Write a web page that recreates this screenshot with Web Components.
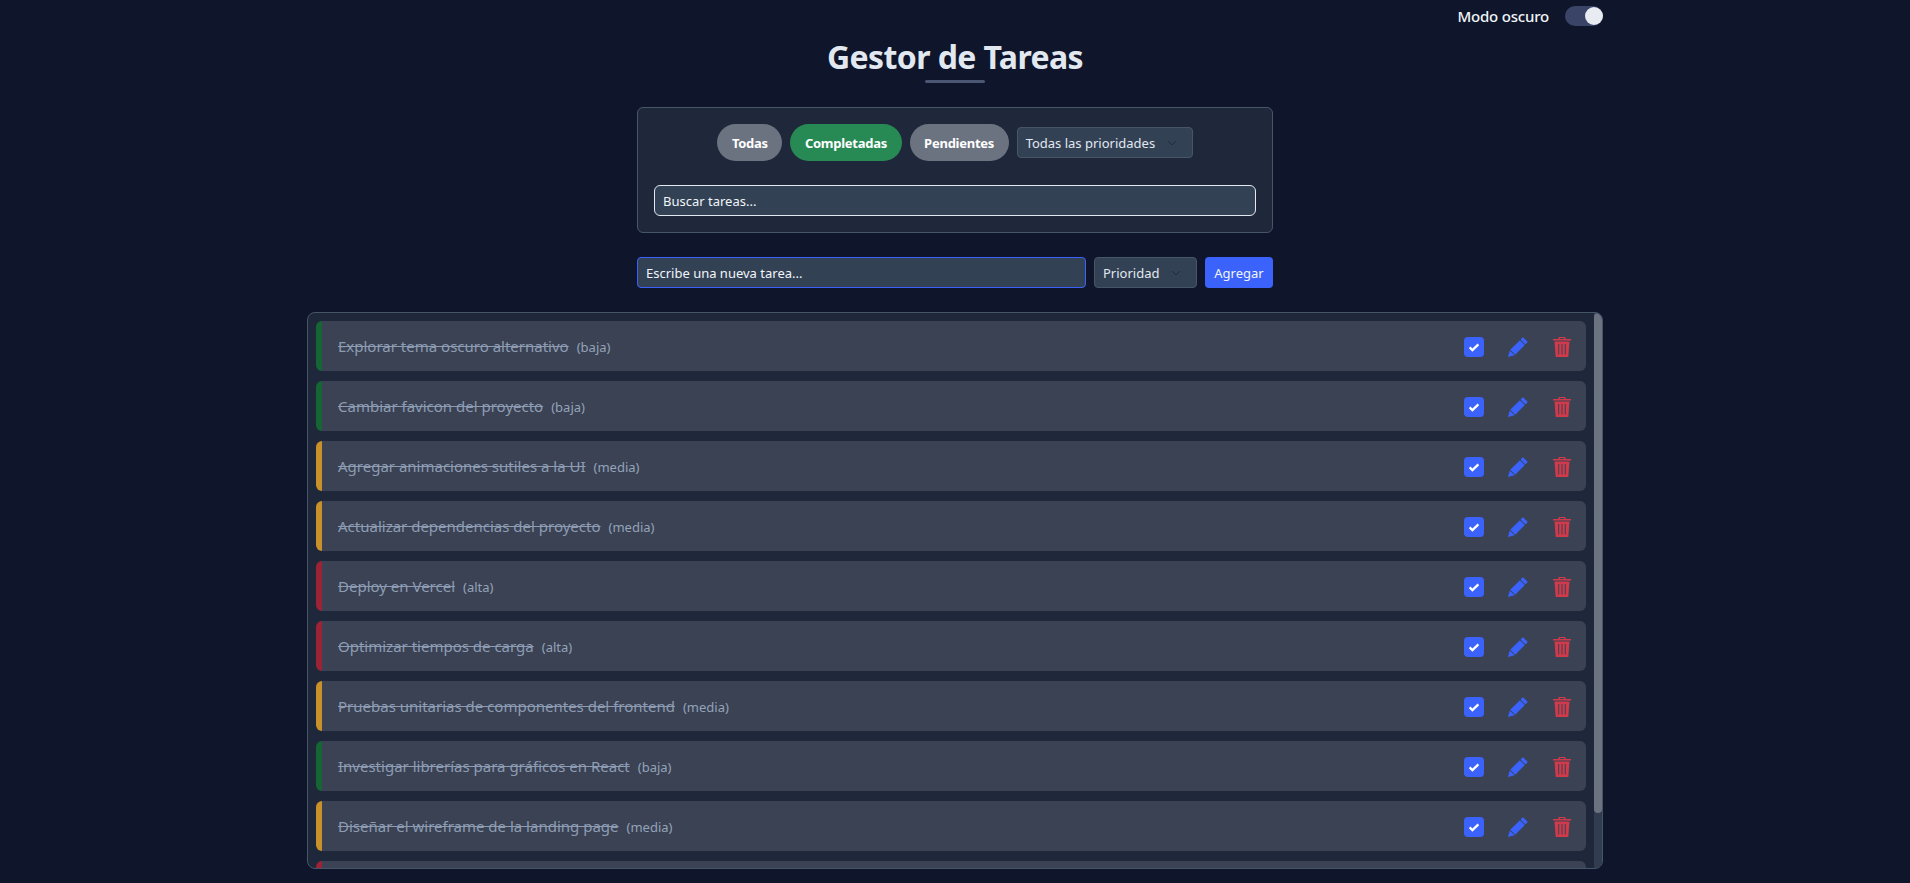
<!DOCTYPE html>
<html lang="es">
<head>
<meta charset="utf-8">
<title>Gestor de Tareas</title>
<style>
  html, body { margin: 0; height: 100%; overflow: hidden; }
  body { background: #0f152a; color: #f1f5f9; font-family: "Noto Sans", "Open Sans", sans-serif; }
</style>
</head>
<body>
<task-app></task-app>
<script>
class ThemeToggle extends HTMLElement {
  constructor() {
    super();
    this.attachShadow({ mode: 'open' });
  }
  connectedCallback() {
    this.shadowRoot.innerHTML = `
      <style>
        :host { display: flex; justify-content: flex-end; align-items: center; gap: 16px; height: 20px; padding-top: 6px; }
        span { font-size: 15px; font-weight: 500; letter-spacing: -0.2px; color: #f1f5f9; }
        .track { width: 38px; height: 20px; border-radius: 10px; background: #3a4466; display: flex; justify-content: flex-end; align-items: center; }
        .knob { width: 18px; height: 18px; border-radius: 50%; background: #e8ebf2; }
      </style>
      <span>Modo oscuro</span>
      <div class="track"><div class="knob"></div></div>
    `;
  }
}

class PillButton extends HTMLElement {
  constructor() {
    super();
    this.attachShadow({ mode: 'open' });
  }
  connectedCallback() {
    this.shadowRoot.innerHTML = `
      <style>
        :host { display: flex; align-items: center; height: 37px; padding: 0 14.5px; border-radius: 19px; background: #6b7280; color: #fff; font-size: 13px; font-weight: 700; letter-spacing: -0.25px; }
        :host([active]) { background: #278a55; }
      </style>
      <slot></slot>
    `;
  }
}

class PrioritySelect extends HTMLElement {
  constructor() {
    super();
    this.attachShadow({ mode: 'open' });
  }
  connectedCallback() {
    this.shadowRoot.innerHTML = `
      <style>
        :host { display: flex; align-items: center; justify-content: space-between; box-sizing: border-box; height: 31px; padding: 0 15px 0 8px; border: 1px solid #475569; border-radius: 4px; background: #334155; color: #e2e8f0; font-size: 13px; }
        svg { width: 10px; height: 10px; fill: none; stroke: #1e293b; stroke-width: 1.5; }
      </style>
      <slot></slot>
      <svg viewBox="0 0 16 16"><path d="M2 5l6 6 6-6"/></svg>
    `;
  }
}

class FilterPanel extends HTMLElement {
  constructor() {
    super();
    this.attachShadow({ mode: 'open' });
  }
  connectedCallback() {
    this.shadowRoot.innerHTML = `
      <style>
        :host { display: flex; flex-direction: column; gap: 24px; box-sizing: border-box; width: 636px; height: 126px; padding: 16px; border: 1px solid #475569; border-radius: 6px; background: #1f283b; }
        .filters { display: flex; justify-content: center; align-items: center; gap: 8px; }
        priority-select { width: 176px; }
        input { box-sizing: border-box; width: 100%; height: 31px; padding: 0 8px; border: 1px solid #e2e8f0; border-radius: 6px; background: #334155; color: #f1f5f9; font: inherit; font-size: 13px; outline: none; }
        input::placeholder { color: #f1f5f9; opacity: 1; }
      </style>
      <div class="filters">
        <pill-button>Todas</pill-button>
        <pill-button active>Completadas</pill-button>
        <pill-button>Pendientes</pill-button>
        <priority-select>Todas las prioridades</priority-select>
      </div>
      <input type="text" placeholder="Buscar tareas...">
    `;
  }
}

class NewTaskForm extends HTMLElement {
  constructor() {
    super();
    this.attachShadow({ mode: 'open' });
  }
  connectedCallback() {
    this.shadowRoot.innerHTML = `
      <style>
        :host { display: flex; gap: 8px; width: 636px; height: 31px; }
        input { flex: 1; min-width: 0; box-sizing: border-box; height: 31px; padding: 1px 8px 0; border: 1px solid #3b63fb; border-radius: 4px; background: #334155; color: #f1f5f9; font: inherit; font-size: 13px; outline: none; }
        input::placeholder { color: #f1f5f9; opacity: 1; }
        priority-select { width: 103px; padding-top: 1px; }
        button { box-sizing: border-box; width: 68px; height: 31px; padding: 1px 0 0; border: 0; border-radius: 4px; background: #3b63fb; color: #f1f5f9; font: inherit; font-size: 13px; }
      </style>
      <input type="text" placeholder="Escribe una nueva tarea...">
      <priority-select>Prioridad</priority-select>
      <button>Agregar</button>
    `;
  }
}

class TaskItem extends HTMLElement {
  constructor() {
    super();
    this.attachShadow({ mode: 'open' });
  }
  connectedCallback() {
    const priority = this.getAttribute('priority');
    this.shadowRoot.innerHTML = `
      <style>
        :host { display: flex; align-items: center; flex: none; box-sizing: border-box; height: 50px; padding: 0 15px 0 16px; border-left: 6px solid #166534; border-radius: 6px; background: #3a4254; }
        :host([priority="media"]) { border-left-color: #c8912a; }
        :host([priority="alta"]) { border-left-color: #9b2335; }
        .title { color: #8d9cb3; font-size: 15px; text-decoration: line-through; }
        .priority { margin: 1px 0 0 8px; color: #94a3b8; font-size: 13px; }
        .actions { display: flex; align-items: center; margin: 2px 0 0 auto; }
        .check { display: flex; align-items: center; justify-content: center; width: 20px; height: 20px; border-radius: 4px; background: #3b63fb; }
        .check svg { width: 14px; height: 14px; fill: none; stroke: #fff; stroke-width: 2.6; }
        .pen { width: 20px; height: 20px; margin-left: 24px; fill: #3b63fb; }
        .trash { width: 18px; height: 20px; margin-left: 25px; fill: #d13a4a; }
      </style>
      <span class="title"><slot></slot></span>
      <span class="priority">${priority && this.textContent ? '(' + priority + ')' : ''}</span>
      <div class="actions">
        <div class="check"><svg viewBox="0 0 16 16"><path d="M3 8.5l3.2 3L13 5"/></svg></div>
        <svg class="pen" viewBox="0 0 20 20"><g transform="rotate(45 10 10)"><rect x="6.5" y="-0.5" width="7" height="3.5" rx="1"/><rect x="6.5" y="3.8" width="7" height="13.7"/><path d="M6.5 18.3h7L10 24z"/></g></svg>
        <svg class="trash" viewBox="0 0 18 20"><path fill-rule="evenodd" d="M6 0h6l1 2h5v1.6H0V2h5zM7 1l-.4 1h4.8L11 1zM1.5 4.6h15L15.3 20H2.7zM5.2 7v10.5h1V7zM8.5 7v10.5h1V7zM11.8 7v10.5h1V7z"/></svg>
      </div>
    `;
  }
}

class TaskList extends HTMLElement {
  constructor() {
    super();
    this.attachShadow({ mode: 'open' });
  }
  connectedCallback() {
    this.shadowRoot.innerHTML = `
      <style>
        :host { display: flex; box-sizing: border-box; width: 1296px; height: 557px; border: 1px solid #475569; border-radius: 8px; background: #1f283b; overflow: hidden; }
        .items { display: flex; flex-direction: column; gap: 10px; flex: 1; min-width: 0; box-sizing: border-box; padding: 8px; overflow: hidden; }
        .track { flex: none; width: 8px; background: #323c50; }
        .thumb { height: 500px; border-radius: 4px; background: #6b7280; }
      </style>
      <div class="items"><slot></slot></div>
      <div class="track"><div class="thumb"></div></div>
    `;
  }
}

const tasks = [
  ['Explorar tema oscuro alternativo', 'baja'],
  ['Cambiar favicon del proyecto', 'baja'],
  ['Agregar animaciones sutiles a la UI', 'media'],
  ['Actualizar dependencias del proyecto', 'media'],
  ['Deploy en Vercel', 'alta'],
  ['Optimizar tiempos de carga', 'alta'],
  ['Pruebas unitarias de componentes del frontend', 'media'],
  ['Investigar librerías para gráficos en React', 'baja'],
  ['Diseñar el wireframe de la landing page', 'media'],
  ['', 'alta'] // cortada abajo, no se llega a leer
];

class TaskApp extends HTMLElement {
  constructor() {
    super();
    this.attachShadow({ mode: 'open' });
  }
  connectedCallback() {
    const items = tasks.map(t => `<task-item priority="${t[1]}">${t[0]}</task-item>`).join('');
    this.shadowRoot.innerHTML = `
      <style>
        :host { display: block; box-sizing: border-box; width: 1296px; margin: 0 auto; }
        header { display: flex; flex-direction: column; align-items: center; height: 81px; }
        h1 { margin: 9px 0 0; font-size: 32px; font-weight: 700; letter-spacing: -0.6px; line-height: 44px; color: #e2e8f0; }
        .bar { width: 60px; height: 3px; border-radius: 2px; background: #4a5672; margin-top: 1px; }
        .center { display: flex; flex-direction: column; align-items: center; }
        new-task-form { margin-top: 24px; }
        task-list { margin-top: 24px; }
      </style>
      <theme-toggle></theme-toggle>
      <header><h1>Gestor de Tareas</h1><div class="bar"></div></header>
      <div class="center">
        <filter-panel></filter-panel>
        <new-task-form></new-task-form>
        <task-list>${items}</task-list>
      </div>
    `;
  }
}

customElements.define('theme-toggle', ThemeToggle);
customElements.define('pill-button', PillButton);
customElements.define('priority-select', PrioritySelect);
customElements.define('filter-panel', FilterPanel);
customElements.define('new-task-form', NewTaskForm);
customElements.define('task-item', TaskItem);
customElements.define('task-list', TaskList);
customElements.define('task-app', TaskApp);
</script>
</body>
</html>
